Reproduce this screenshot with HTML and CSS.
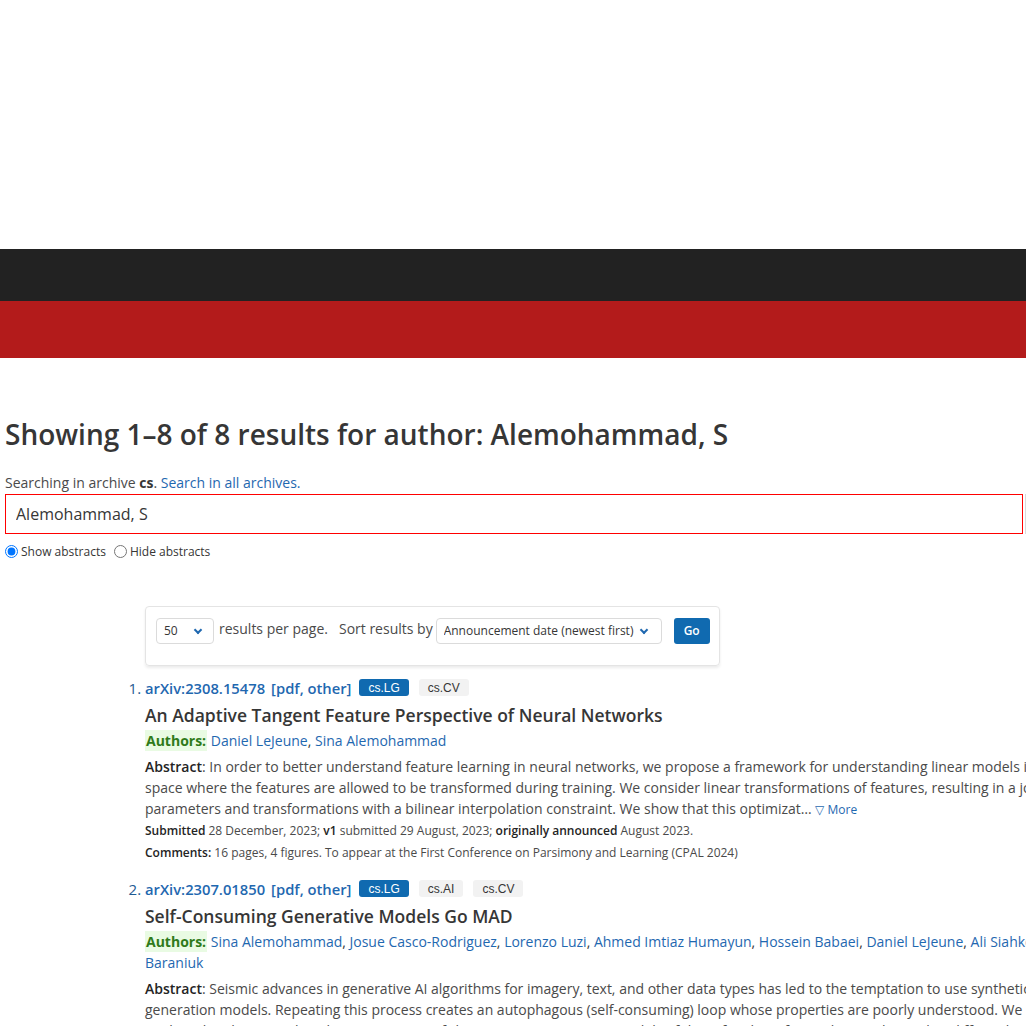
FILE: index.html
```html
<!DOCTYPE html>
<html lang="en">
<head>
<meta charset="utf-8">
<title>Search | arXiv e-print repository</title>
<link rel="stylesheet" href="styles.css">
</head>
<body>
<header class="site-header">
  <div class="header-top"></div>
  <div class="header-dark"></div>
  <div class="header-red"></div>
</header>
<main class="content">
  <h1 class="page-title">Showing 1&ndash;8 of 8 results for author: Alemohammad, S</h1>
  <div class="search-scope">Searching in archive <strong>cs</strong>. <a href="#">Search in all archives.</a></div>
  <form class="search-row">
    <input class="search-input" type="text" value="Alemohammad, S">
    <button class="search-btn" type="button">Search</button>
  </form>
  <div class="abstract-toggle">
    <label class="toggle-option"><input type="radio" name="abs" checked> Show abstracts</label>
    <label class="toggle-option"><input type="radio" name="abs"> Hide abstracts</label>
  </div>

  <div class="results">
    <div class="options-box">
      <div class="select-wrap select-size"><select class="select"><option>50</option></select></div>
      <span class="opt-text">results per page.</span>
      <span class="opt-text sort-label">Sort results by</span>
      <div class="select-wrap select-order"><select class="select"><option>Announcement date (newest first)</option></select></div>
      <button class="go-btn" type="button">Go</button>
    </div>

    <ol class="result-list">
      <li class="result">
        <div class="result-head">
          <a class="arxiv-id" href="#">arXiv:2308.15478</a>
          <span class="formats">[<a href="#">pdf</a>, <a href="#">other</a>]</span>
          <span class="tag tag-primary">cs.LG</span>
          <span class="tag">cs.CV</span>
        </div>
        <p class="paper-title">An Adaptive Tangent Feature Perspective of Neural Networks</p>
        <p class="authors"><span class="authors-label">Authors:</span> <a href="#">Daniel LeJeune</a>, <a href="#">Sina Alemohammad</a></p>
        <p class="abstract"><span class="abstract-label">Abstract</span>: In order to better understand feature learning in neural networks, we propose a framework for understanding linear models in tangent feature space where the features are allowed to be transformed during training. We consider linear transformations of features, resulting in a joint optimization over parameters and transformations with a bilinear interpolation constraint. We show that this optimizat&hellip; <a class="more" href="#">&#9661; More</a></p>
        <p class="meta"><b>Submitted</b> 28 December, 2023; <b>v1</b> submitted 29 August, 2023; <b>originally announced</b> August 2023.</p>
        <p class="meta comments"><b>Comments:</b> 16 pages, 4 figures. To appear at the First Conference on Parsimony and Learning (CPAL 2024)</p>
      </li>
      <li class="result">
        <div class="result-head">
          <a class="arxiv-id" href="#">arXiv:2307.01850</a>
          <span class="formats">[<a href="#">pdf</a>, <a href="#">other</a>]</span>
          <span class="tag tag-primary">cs.LG</span>
          <span class="tag">cs.AI</span>
          <span class="tag">cs.CV</span>
        </div>
        <p class="paper-title">Self-Consuming Generative Models Go MAD</p>
        <p class="authors"><span class="authors-label">Authors:</span> <a href="#">Sina Alemohammad</a>, <a href="#">Josue Casco-Rodriguez</a>, <a href="#">Lorenzo Luzi</a>, <a href="#">Ahmed Imtiaz Humayun</a>, <a href="#">Hossein Babaei</a>, <a href="#">Daniel LeJeune</a>, <a href="#">Ali Siahkoohi</a>, <a href="#">Richard G. Baraniuk</a></p>
        <p class="abstract"><span class="abstract-label">Abstract</span>: Seismic advances in generative AI algorithms for imagery, text, and other data types has led to the temptation to use synthetic data to train next-generation models. Repeating this process creates an autophagous (self-consuming) loop whose properties are poorly understood. We conduct a thorough analytical and empirical analysis using state-of-the-art generative image models of three families of autophagous loops that differ in how fixed or fresh real training data is available through the generations of training and in whether the samples from previous&hellip; <a class="more" href="#">&#9661; More</a></p>
        <p class="meta"><b>Submitted</b> 4 July, 2023; <b>originally announced</b> July 2023.</p>
      </li>
    </ol>
  </div>
</main>
</body>
</html>
```

FILE: styles.css
```css
html, body {
  overflow: hidden;
}

body {
  margin: 0;
  font-family: "Open Sans", "Noto Sans", sans-serif;
  color: #363636;
  background: #fff;
}

a {
  color: #1f68b0;
  text-decoration: none;
}

/* Header bands */
.header-top { height: 249px; background: #fff; }
.header-dark { height: 52px; background: #222222; }
.header-red { height: 57px; background: #b31b1b; }

.content {
  padding: 0 5px;
}

.page-title {
  margin: 60px 0 0;
  font-size: 28px;
  line-height: 33.6px;
  font-weight: 600;
  color: #363636;
  white-space: nowrap;
}

.search-scope {
  margin-top: 21px;
  font-size: 14px;
  line-height: 20px;
  color: #4a4a4a;
}
.search-scope strong { font-weight: 700; color: #363636; }

.search-row {
  display: flex;
  margin: 1px 0 0;
  width: 1200px;
}

.search-input {
  box-sizing: border-box;
  width: 1018px;
  height: 40px;
  margin: 0;
  padding: 0 10px;
  border: 1px solid #ff0000;
  border-radius: 0;
  font-family: "Open Sans", sans-serif;
  font-size: 16px;
  color: #363636;
  outline: none;
}

.search-btn {
  height: 40px;
  margin-left: 2px;
  padding: 0 16px;
  border: 1px solid #dbdbdb;
  background: #f5f5f5;
  font-family: "Open Sans", sans-serif;
  font-size: 14px;
}

.abstract-toggle {
  display: flex;
  align-items: center;
  margin-top: 9px;
  height: 18px;
  font-size: 12px;
  line-height: 18px;
  color: #363636;
}

.toggle-option {
  display: flex;
  align-items: center;
  margin-right: 8px;
}

.toggle-option input {
  width: 13px;
  height: 13px;
  margin: 0 3px 0 0;
}

/* Results area */
.results {
  margin: 45px 0 0 140px;
}

.options-box {
  display: inline-flex;
  align-items: flex-start;
  padding: 11px 9px 21px 10px;
  border: 1px solid #e4e4e4;
  border-radius: 4px;
  box-shadow: 0 2px 3px rgba(10, 10, 10, 0.08);
}

.select-wrap {
  position: relative;
}

.select-wrap::after {
  content: "";
  position: absolute;
  top: 9px;
  width: 4px;
  height: 4px;
  border-right: 2px solid #1f68b0;
  border-bottom: 2px solid #1f68b0;
  transform: rotate(45deg);
  pointer-events: none;
}

.select-size::after { left: 39px; }
.select-order::after { left: 205px; }

.select {
  appearance: none;
  -webkit-appearance: none;
  box-sizing: border-box;
  height: 26px;
  margin: 0;
  padding: 0 0 0 7px;
  border: 1px solid #dbdbdb;
  border-radius: 4px;
  background: #fff;
  font-family: "Open Sans", sans-serif;
  font-size: 12px;
  color: #363636;
}

.select-size .select { width: 58px; }
.select-order .select { width: 226px; }

.opt-text {
  margin-left: 5px;
  font-size: 14px;
  line-height: 22px;
  color: #4a4a4a;
}

.opt-text.sort-label {
  margin-left: 11px;
  margin-right: 3px;
}

.go-btn {
  box-sizing: border-box;
  width: 36px;
  height: 26px;
  margin-left: 12px;
  padding: 0;
  border: none;
  border-radius: 3px;
  background: #106ab0;
  color: #fff;
  font-family: "Open Sans", sans-serif;
  font-size: 12px;
  font-weight: 600;
}

.result-list {
  width: 1028px;
  margin: 11px 0 0;
  padding: 0;
  list-style-position: outside;
}

.result {
  margin-bottom: 15px;
  font-size: 15px;
}

.result::marker {
  color: #1f5a92;
  font-size: 15px;
}

.result-head {
  display: flex;
  align-items: center;
  height: 22px;
  line-height: 22px;
  font-size: 14.75px;
}

.arxiv-id,
.formats,
.formats a {
  font-weight: 600;
  color: #1f68b0;
}

.formats {
  margin-left: 6px;
}

.tag {
  display: inline-flex;
  align-items: center;
  height: 17px;
  margin-left: 10px;
  padding: 0 9px;
  border-radius: 3px;
  background: #f2f2f2;
  font-family: "Liberation Sans", Arial, sans-serif;
  font-size: 12px;
  color: #363636;
}

.formats + .tag {
  margin-left: 8px;
}

.tag-primary {
  background: #106ab0;
  color: #fff;
}

.paper-title {
  margin: 4px 0 0;
  font-size: 17.5px;
  line-height: 24px;
  font-weight: 600;
  color: #363636;
}

.authors {
  margin: 3px 0 0;
  font-size: 14px;
  line-height: 21px;
}

.authors-label {
  padding: 1px 1px;
  background: #e9fbe3;
  color: #2f7a1a;
  font-weight: 700;
}

.abstract {
  margin: 5px 0 0;
  font-size: 14px;
  line-height: 21px;
  color: #4a4a4a;
}

.abstract-label {
  font-weight: 600;
  color: #242424;
}

.more {
  font-size: 12px;
}

.meta {
  margin: 0;
  font-size: 12px;
  line-height: 21px;
  color: #4a4a4a;
}

.meta b {
  font-weight: 600;
  color: #242424;
}

.meta.comments {
  margin-top: 1px;
}
```
